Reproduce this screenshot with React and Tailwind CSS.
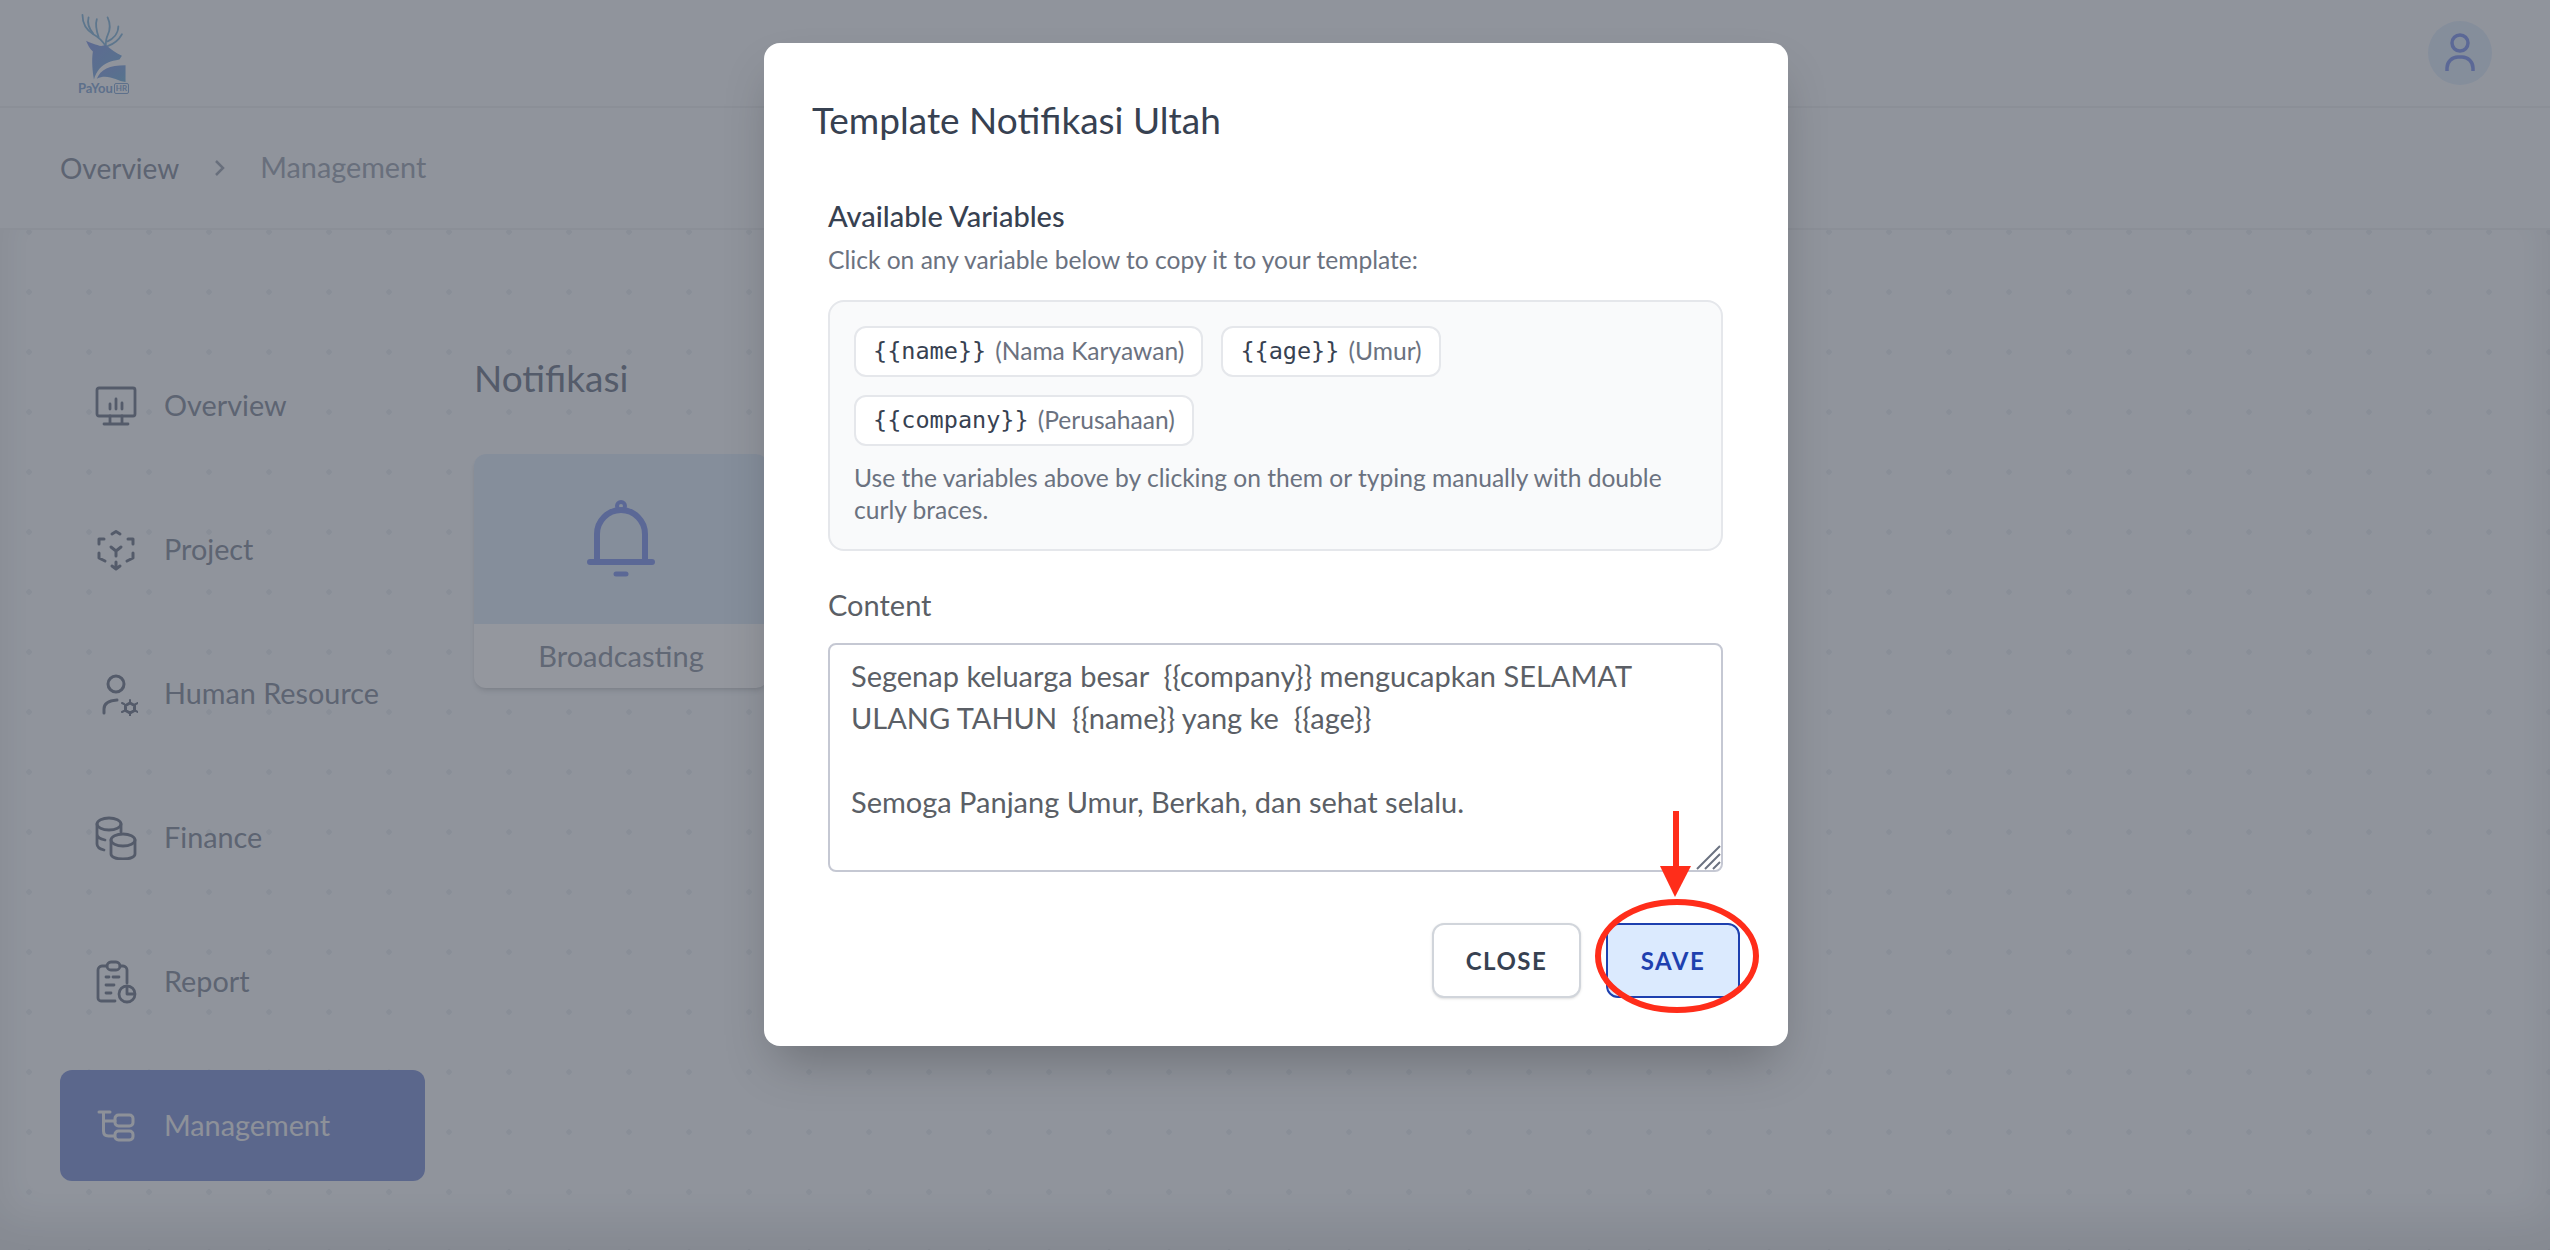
import React from 'react';

const FONT = "font-['Lato','Noto_Sans',sans-serif]";

const IconOverview = () => (
    <svg width="44" height="44" viewBox="0 0 44 44" fill="none" stroke="currentColor" strokeWidth="2.8" strokeLinecap="round" strokeLinejoin="round">
        <rect x="3" y="4" width="38" height="28" rx="2" />
        <path d="M16 32v7M28 32v7M10 40h24" />
        <path d="M16 20v5M22 15v10M28 19v6" />
    </svg>
);

const IconProject = () => (
    <svg width="44" height="44" viewBox="0 0 44 44" fill="none" stroke="currentColor" strokeWidth="3" strokeLinecap="round" strokeLinejoin="round">
        <path d="M18 6l4-2.500 4 2.500" />
        <path d="M5 16v-5h5M39 16v-5h-5" />
        <path d="M5 25v5l6 3M39 25v5l-6 3" />
        <path d="M22 34v6M18 38l4 3 4-3" />
        <path d="M17 19l5 4 5-4M22 23v5" />
    </svg>
);

const IconPeople = () => (
    <svg width="44" height="44" viewBox="0 0 44 44" fill="none" stroke="currentColor" strokeWidth="3" strokeLinecap="round" strokeLinejoin="round">
        <circle cx="22" cy="12" r="8" />
        <path d="M10 41v-4q0-8 13-9" />
        <path d="M36 31l4.500 2.500v5L36 41l-4.500-2.500v-5z" />
        <path d="M36 28v3M36 41v3M30 32l-2-1M44 31l-3 1.500M30 39l-2 1M44 40l-3-1.500" strokeWidth="2" />
    </svg>
);

const IconFinance = () => (
    <svg width="44" height="44" viewBox="0 0 44 44" fill="none" stroke="currentColor" strokeWidth="2.8" strokeLinecap="round" strokeLinejoin="round">
        <ellipse cx="15" cy="8" rx="12" ry="6" />
        <path d="M3 8v20c0 3 3 5 7 6M3 18c0 3 3 5 8 6M27 8v8" />
        <ellipse cx="29" cy="24" rx="12" ry="6" />
        <path d="M17 24v14c0 3 5 5 12 5s12-2 12-5V24" />
    </svg>
);

const IconReport = () => (
    <svg width="44" height="44" viewBox="0 0 44 44" fill="none" stroke="currentColor" strokeWidth="2.8" strokeLinecap="round" strokeLinejoin="round">
        <rect x="13" y="2" width="13" height="8" rx="4" />
        <path d="M13 6H8a4 4 0 0 0-4 4v28a3 3 0 0 0 3 3h14M26 6h3a4 4 0 0 1 4 4v13" />
        <path d="M12 17h3M19 17h6M12 25h8M12 33h5" />
        <circle cx="33" cy="34" r="8" />
        <path d="M33 28v6h6" />
    </svg>
);

const IconManagement = () => (
    <svg width="44" height="44" viewBox="0 0 44 44" fill="none" stroke="currentColor" strokeWidth="3" strokeLinecap="round" strokeLinejoin="round">
        <path d="M5 8h11M9.500 8v19q0 5 5 5h6M9.500 17H21" />
        <rect x="21" y="11" width="18" height="11" rx="3.500" />
        <rect x="21" y="27" width="18" height="9" rx="3.500" />
    </svg>
);

const IconBell = () => (
    <svg width="68" height="80" viewBox="0 0 68 80" fill="none" stroke="currentColor" strokeWidth="6" strokeLinecap="round">
        <circle cx="34" cy="7" r="4" strokeWidth="4" />
        <path d="M10 62V35a24 24 0 0 1 48 0v27" />
        <path d="M3 63h62" strokeWidth="6" />
        <path d="M29 75h10" strokeWidth="5" />
    </svg>
);

const DeerLogo = () => (
    <svg width="52" height="70" viewBox="85 30 140 195" fill="none">
        <defs>
            <linearGradient id="deerFill" x1="0" y1="0" x2="1" y2="1">
                <stop offset="0" stopColor="#9cace8" />
                <stop offset="1" stopColor="#8fc0e0" />
            </linearGradient>
        </defs>
        <g stroke="#9cc4e0" strokeWidth="5" strokeLinecap="round">
            <path d="M95 38C95 60 105 80 125 92C140 100 150 110 160 125" />
            <path d="M112 45C108 60 112 75 125 90" />
            <path d="M135 50C130 65 135 85 140 100" />
            <path d="M165 45C172 60 175 75 165 95C160 105 160 115 160 125" />
            <path d="M195 70C195 90 180 105 165 112" />
            <path d="M205 92C195 110 180 120 165 125" />
        </g>
        <path d="M105 110C115 115 135 122 147 125L160 122C175 135 190 145 205 152L198 162C185 165 175 166 168 170C148 178 133 195 127 218C123 195 120 165 124 140C115 132 110 122 105 110Z" fill="url(#deerFill)" />
        <path d="M135 216C145 190 170 178 215 178L215 225C190 222 165 200 135 216Z" fill="url(#deerFill)" />
    </svg>
);

const menuItems = [
    { label: 'Overview', icon: IconOverview },
    { label: 'Project', icon: IconProject },
    { label: 'Human Resource', icon: IconPeople },
    { label: 'Finance', icon: IconFinance },
    { label: 'Report', icon: IconReport },
    { label: 'Management', icon: IconManagement, active: true },
];

const variables = [
    { code: '{{name}}', hint: '(Nama Karyawan)' },
    { code: '{{age}}', hint: '(Umur)' },
    { code: '{{company}}', hint: '(Perusahaan)' },
];

const templateText = `Segenap keluarga besar  {{company}} mengucapkan SELAMAT ULANG TAHUN  {{name}} yang ke  {{age}}

Semoga Panjang Umur, Berkah, dan sehat selalu.`;

const App = () => {
    return (
        <div className={`relative h-[1250px] w-full overflow-hidden bg-[#f8fafc] ${FONT}`}>
            <header className="flex h-[108px] items-center justify-between border-b-2 border-[#eef0f3] pl-[78px] pr-[58px]">
                <div className="flex flex-col items-start">
                    <DeerLogo />
                    <div className="flex items-center gap-[1px] text-[13px] font-bold leading-[13px] text-[#9cb8dc]">
                        PaYou
                        <span className="rounded-[2px] border border-[#9cb8dc] px-[1px] text-[8px] leading-[9px]">HR</span>
                    </div>
                </div>
                <div className="flex h-16 w-16 items-center justify-center rounded-full bg-[#e4eefa] text-[#98aaf0]">
                    <svg width="30" height="40" viewBox="0 0 30 40" fill="none" stroke="currentColor" strokeWidth="3.500">
                        <circle cx="15" cy="10" r="8" />
                        <path d="M2 38v-3a11 11 0 0 1 11-11h4a11 11 0 0 1 11 11v3" />
                    </svg>
                </div>
            </header>

            <nav className="flex h-[122px] items-center border-b-2 border-[#eef0f3] pl-[60px] text-[28px]">
                <span className="text-[#9ca3af]">Overview</span>
                <svg className="ml-[33px] mr-[32px] text-[#b0b6c2]" width="16" height="20" viewBox="0 0 16 20" fill="none" stroke="currentColor" strokeWidth="2.500">
                    <path d="M4 3l7 7-7 7" />
                </svg>
                <span className="text-[28.8px] text-[#b0b6c2]">Management</span>
            </nav>

            <main className="flex h-[1020px] bg-[radial-gradient(circle,#eceff3_2.500px,transparent_3px)] bg-[size:60px_60px] bg-[position:-1px_-28px] pl-[60px] shadow-[inset_0_-30px_40px_rgba(0,0,0,0.08)]">
                <aside className="mt-[120px] flex w-[365px] flex-col gap-[33px]">
                    {menuItems.map((item) => (
                        <div
                            key={item.label}
                            className={`flex h-[111px] items-center gap-[26px] rounded-xl pl-[34px] text-[28.8px] ${item.active ? 'bg-[#98a8df] text-[#f3f4f6]' : 'text-[#9ca3af]'}`}
                        >
                            <span className={item.active ? '' : 'text-[#8b92a0]'}>
                                <item.icon />
                            </span>
                            <span>{item.label}</span>
                        </div>
                    ))}
                </aside>
                <section className="ml-[49px] mt-[125px]">
                    <h2 className="text-[37px] leading-[46px] text-[#8b93a1]">Notifikasi</h2>
                    <div className="mt-[53px] w-[294px] overflow-hidden rounded-xl bg-white shadow-md">
                        <div className="flex h-[170px] items-center justify-center bg-[#e4eefa] text-[#98aaf0]">
                            <IconBell />
                        </div>
                        <div className="flex h-[64px] items-center justify-center text-[29px] text-[#a3a9b5]">Broadcasting</div>
                    </div>
                </section>
            </main>

            <div className="absolute inset-0 flex items-start justify-center bg-[rgba(17,24,39,0.45)] pl-[2px] pt-[43px]">
                <div className="relative h-[1003px] w-[1024px] rounded-2xl bg-white px-[48px] pt-[53px] shadow-2xl">
                    <h2 className="text-[37px] leading-[48px] text-[#374151]">Template Notifikasi Ultah</h2>

                    <div className="ml-[16px] mr-[17px] mt-[55px]">
                        <h3 className="text-[29px] font-medium leading-[34px] text-[#374151]">Available Variables</h3>
                        <p className="mt-[11px] text-[24.6px] leading-[32px] text-[#6b7280]">Click on any variable below to copy it to your template:</p>

                        <div className="mt-[24px] h-[251px] rounded-2xl border-2 border-[#e5e7eb] bg-[#f9fafb] px-[24px] pt-[24px]">
                            <div className="flex flex-wrap gap-[18px]">
                                {variables.map((v) => (
                                    <div key={v.code} className={`flex h-[51px] items-center gap-[9px] rounded-xl border-2 border-[#e5e7eb] bg-white px-[17px] ${v.code === '{{company}}' ? 'mr-[300px]' : ''}`}>
                                        <code className="font-['DejaVu_Sans_Mono',monospace] text-[23.5px] text-[#374151]">{v.code}</code>
                                        <span className="text-[24.6px] text-[#6b7280]">{v.hint}</span>
                                    </div>
                                ))}
                            </div>
                            <p className="mt-[16px] text-[24.6px] leading-[32px] text-[#6b7280]">
                                Use the variables above by clicking on them or typing manually with double curly braces.
                            </p>
                        </div>

                        <label className="mt-[34px] block text-[29px] leading-[40px] text-[#5b5f66]">Content</label>
                        <div className="relative mt-[18px]">
                            <textarea
                                readOnly
                                defaultValue={templateText}
                                className={`block h-[229px] w-full resize-none rounded-lg border-2 border-[#c5c8d3] px-[21px] pb-[11px] pt-[10px] text-[29px] leading-[42px] text-[#5b5f66] outline-none ${FONT}`}
                            />
                            <svg className="absolute bottom-[2px] right-[2px]" width="25" height="25" viewBox="0 0 25 25" stroke="#6b7280" strokeWidth="2">
                                <path d="M1 24L24 1M9 24L24 9M17 24l7-7" />
                            </svg>
                        </div>
                    </div>

                    <div className="mt-[51px] flex justify-end gap-[25px]">
                        <button className="h-[75px] w-[149px] rounded-xl border-2 border-[#d1d5db] bg-white text-[24px] font-bold tracking-[1.500px] text-[#374151] shadow-sm">CLOSE</button>
                        <button className="h-[75px] w-[134px] rounded-xl border-2 border-[#1e40af] bg-[#dbeafe] text-[24px] font-bold tracking-[1.500px] text-[#1e40af]">SAVE</button>
                    </div>
                </div>
            </div>

            <svg className="absolute left-[1580px] top-[800px]" width="200" height="225" viewBox="1580 800 200 225" fill="none">
                <ellipse cx="1677" cy="956" rx="79" ry="54" stroke="#ff2d1a" strokeWidth="6" />
                <path d="M1676 811V870" stroke="#ff2d1a" strokeWidth="6" />
                <path d="M1660 866H1691L1675 897Z" fill="#ff2d1a" />
            </svg>
        </div>
    );
};

export default App;
